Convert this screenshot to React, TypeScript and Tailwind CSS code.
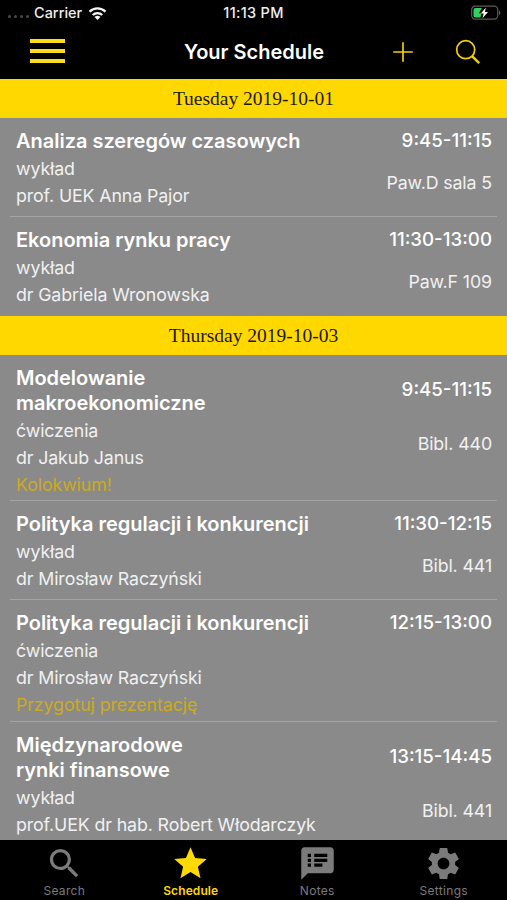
import type { ReactNode } from "react";
import { MdSearch, MdSettings, MdSpeakerNotes, MdStar } from "react-icons/md";

type Lesson = {
  title: string[];
  kind: string;
  teacher: string;
  time: string;
  room?: string;
  note?: string;
  height: string;
};

const tuesday: Lesson[] = [
  { title: ["Analiza szeregów czasowych"], kind: "wykład", teacher: "prof. UEK Anna Pajor", time: "9:45-11:15", room: "Paw.D sala 5", height: "h-[99px]" },
  { title: ["Ekonomia rynku pracy"], kind: "wykład", teacher: "dr Gabriela Wronowska", time: "11:30-13:00", room: "Paw.F 109", height: "h-[99px]" },
];

const thursday: Lesson[] = [
  { title: ["Modelowanie", "makroekonomiczne"], kind: "ćwiczenia", teacher: "dr Jakub Janus", time: "9:45-11:15", room: "Bibl. 440", note: "Kolokwium!", height: "h-[146px]" },
  { title: ["Polityka regulacji i konkurencji"], kind: "wykład", teacher: "dr Mirosław Raczyński", time: "11:30-12:15", room: "Bibl. 441", height: "h-[99px]" },
  { title: ["Polityka regulacji i konkurencji"], kind: "ćwiczenia", teacher: "dr Mirosław Raczyński", time: "12:15-13:00", note: "Przygotuj prezentację", height: "h-[122px]" },
  { title: ["Międzynarodowe", "rynki finansowe"], kind: "wykład", teacher: "prof.UEK dr hab. Robert Włodarczyk", time: "13:15-14:45", room: "Bibl. 441", height: "h-[119px]" },
];

function StatusBar() {
  return (
    <div className="grid h-[26px] grid-cols-3 items-center text-[14.5px] font-medium leading-[26px] text-[#eee]">
      <div className="flex items-center pl-2">
        <div className="flex gap-[3px] pt-[7px]">
          {[0, 1, 2, 3].map((i) => (
            <span key={i} className="size-[3px] rounded-full bg-[#4a4a4a]" />
          ))}
        </div>
        <span className="ml-[5px] whitespace-nowrap">Carrier</span>
        <svg className="ml-[6px]" width="19" height="15" viewBox="0 0 20 15" fill="none" stroke="#f4f4f4" strokeWidth="2.5">
          <path d="M1.6 5.6a12 12 0 0 1 16.8 0" />
          <path d="M5 9.1a7.2 7.2 0 0 1 10 0" />
          <path d="M10 14.4 6.9 11.3a4.5 4.5 0 0 1 6.2 0Z" fill="#f4f4f4" stroke="none" />
        </svg>
      </div>
      <span className="whitespace-nowrap text-center tracking-[0.3px]">11:13 PM</span>
      <div className="flex justify-end pr-[6px]">
        <svg width="30" height="16" viewBox="0 0 30 16">
          <rect x="0.7" y="1.2" width="26" height="13" rx="3.6" fill="none" stroke="#5c5c5c" strokeWidth="1.2" />
          <path d="M28 5.6c1.8.5 1.8 4 0 4.5Z" fill="#5c5c5c" />
          <path d="M4.5 3H11L8 8.3H10.3L9.5 12.5H4.5A2 2 0 0 1 2.5 10.5V5A2 2 0 0 1 4.5 3Z" fill="#34d05c" />
          <path d="M14.9 2.5 9.8 8.6H12.7L11.5 13.3 17 6.9H13.9Z" fill="#fff" />
        </svg>
      </div>
    </div>
  );
}

function NavBar() {
  return (
    <div className="flex h-[53px] items-center">
      <div className="flex w-[100px] flex-col gap-[6px] pb-[3px] pl-[30px]">
        <span className="h-[4px] w-[35px] bg-[#fddc1c]" />
        <span className="h-[4px] w-[35px] bg-[#fddc1c]" />
        <span className="h-[4px] w-[35px] bg-[#fddc1c]" />
      </div>
      <h1 className="flex-1 pl-[64px] pr-[48px] pb-px text-center text-[20px] font-semibold whitespace-nowrap">
        Your Schedule
      </h1>
      <svg className="mr-[41px] mb-[2px]" width="22" height="22" viewBox="0 0 22 22" stroke="#f3cf08" strokeWidth="1.7">
        <path d="M11 1.2V20.8M1.2 11H20.8" />
      </svg>
      <svg className="mr-[26px] mb-[2px]" width="26" height="26" viewBox="0 0 26 26" fill="none" stroke="#f3cf08">
        <circle cx="10.7" cy="10.7" r="9" strokeWidth="1.7" />
        <path d="M17 17.2 24.2 24.2" strokeWidth="2.5" />
      </svg>
    </div>
  );
}

function DayHeader({ children }: { children: ReactNode }) {
  return (
    <h2 className="h-[39px] bg-[#ffd800] text-center font-['Liberation_Serif',serif] text-[19.5px] leading-[40px] text-[#1d1a06]">
      {children}
    </h2>
  );
}

function LessonRow({ lesson, last }: { lesson: Lesson; last: boolean }) {
  return (
    <li className={`px-[10px] ${lesson.height}`}>
      <div className={`h-full pl-[6px] pr-[5px] pt-[11px] ${last ? "" : "border-b-[1.5px] border-[#a3a3a3]"}`}>
        <div className="flex items-center justify-between">
          <h3 className="text-[20px] font-semibold leading-[24.5px] tracking-[-0.02px]">
            {lesson.title.map((line) => (
              <span key={line} className="block whitespace-nowrap">{line}</span>
            ))}
          </h3>
          <span className="text-[18.7px] font-medium leading-[24.5px]">{lesson.time}</span>
        </div>
        <div className="mt-[1.5px] flex items-center justify-between text-[17.8px] leading-[27px] tracking-[-0.12px] text-[#f1f1f1]">
          <div className="whitespace-nowrap">
            <p>{lesson.kind}</p>
            <p>{lesson.teacher}</p>
          </div>
          <span>{lesson.room}</span>
        </div>
        {lesson.note && <p className="text-[17.8px] leading-[27px] tracking-[-0.1px] text-[#ccaa1e]">{lesson.note}</p>}
      </div>
    </li>
  );
}

function Lessons({ items }: { items: Lesson[] }) {
  return (
    <ul>
      {items.map((lesson, i) => (
        <LessonRow key={i} lesson={lesson} last={i === items.length - 1} />
      ))}
    </ul>
  );
}

const tabs = [
  { label: "Search", Icon: MdSearch },
  { label: "Schedule", Icon: MdStar, active: true },
  { label: "Notes", Icon: MdSpeakerNotes },
  { label: "Settings", Icon: MdSettings },
];

export default function App() {
  return (
    <div className="flex h-[900px] w-[507px] flex-col overflow-hidden bg-[#8a8a8a] font-['Inter',sans-serif] text-white">
      <header className="h-[79px] bg-black">
        <StatusBar />
        <NavBar />
      </header>
      <main className="h-[761px]">
        <DayHeader>Tuesday 2019-10-01</DayHeader>
        <Lessons items={tuesday} />
        <DayHeader>Thursday 2019-10-03</DayHeader>
        <Lessons items={thursday} />
      </main>
      <nav className="grid h-[60px] grid-cols-4 bg-black pl-px">
        {tabs.map(({ label, Icon, active }) => (
          <div key={label} className={`flex flex-col items-center pt-[4px] ${active ? "font-semibold text-[#ffd900]" : "text-[#7b7b7b]"}`}>
            <Icon size={39} />
            <span className={`text-[12px] leading-[16px] ${active ? "tracking-[0.1px]" : "tracking-[0.3px]"}`}>{label}</span>
          </div>
        ))}
      </nav>
    </div>
  );
}
